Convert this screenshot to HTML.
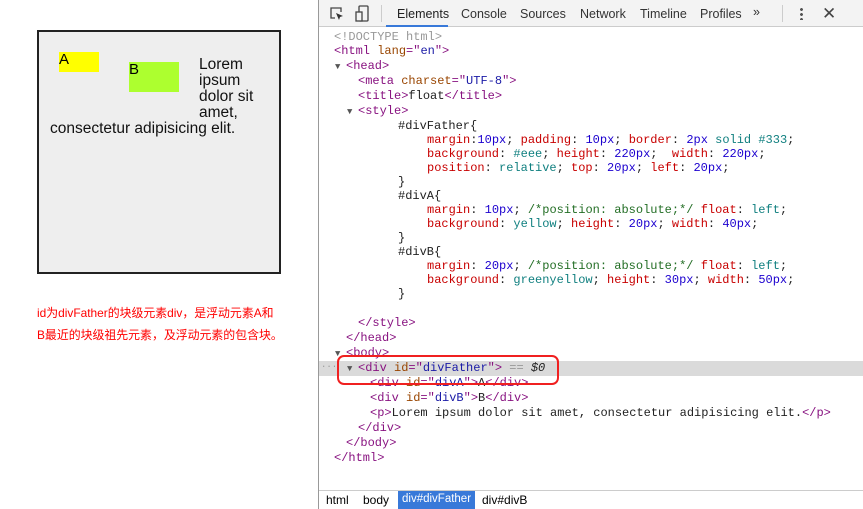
<!DOCTYPE html>
<html><head><meta charset="utf-8"><style>
*{margin:0;padding:0;box-sizing:border-box}
body{width:863px;height:509px;background:#fff;position:relative;overflow:hidden;font-family:"Liberation Sans",sans-serif}
.box{position:absolute;left:37px;top:30px;width:244px;height:244px;border:2px solid #222;background:#eee}
.a{position:absolute;left:59px;top:52px;width:40px;height:20px;background:#ff0;font-size:15px;line-height:16px}
.b{position:absolute;left:129px;top:62px;width:50px;height:30px;background:#adff2f;font-size:15px;line-height:16px}
.lt{position:absolute;font-size:15.5px;line-height:16px;color:#111}
.red{position:absolute;left:37px;color:#f00;font-size:11.9px;font-family:"Liberation Sans","Noto Sans CJK SC",sans-serif}
.dev{position:absolute;left:318px;top:0;width:545px;height:509px;border-left:1px solid #999;background:#fff}
.tb{position:absolute;left:0;top:0;width:545px;height:27px;background:#f3f3f3;border-bottom:1px solid #ccc}
.tab{position:absolute;top:7px;font-size:12.5px;color:#333}
.l{position:absolute;font-family:"Liberation Mono",monospace;font-size:12px;line-height:14px;white-space:pre;color:#222}
.t{color:#881280}.an{color:#994500}.av{color:#1a1aa6}.g{color:#999}
.p{color:#c80000}.n{color:#1c00cf}.k{color:#0f7f7f}.c{color:#236e25}
.tri{font-size:9px;color:#555}
.hl{position:absolute;left:0;top:361px;width:545px;height:15px;background:#dadada}
.rb{position:absolute;left:18px;top:355px;width:222px;height:30px;border:2px solid #f02020;border-radius:7px}
.bot{position:absolute;left:0;top:490px;width:545px;height:19px;border-top:1px solid #ccc;background:#fff;font-size:12px}
.bot span{position:absolute;top:2px}
</style></head><body>
<div class="box"></div>
<div class="a">A</div>
<div class="b">B</div>
<div class="lt" style="left:199px;top:57px">Lorem<br>ipsum<br>dolor sit<br>amet,</div>
<div class="lt" style="left:50px;top:121px">consectetur adipisicing elit.</div>
<div class="red" style="top:304px">id为divFather的块级元素div，是浮动元素A和</div>
<div class="red" style="top:326px">B最近的块级祖先元素，及浮动元素的包含块。</div>

<div class="dev">
<div class="tb">
<svg style="position:absolute;left:10px;top:6px" width="16" height="16" viewBox="0 0 16 16"><path d="M6 12H2V2h10v4" fill="none" stroke="#444" stroke-width="1.3"/><path d="M7 7l7 3-3 1-1 3z" fill="#333"/></svg>
<svg style="position:absolute;left:36px;top:5px" width="14" height="18" viewBox="0 0 14 18"><rect x="4" y="1" width="9" height="15" rx="1" fill="none" stroke="#444" stroke-width="1.3"/><rect x="1" y="7" width="6" height="9" fill="#f3f3f3" stroke="#444" stroke-width="1.3"/></svg>
<div style="position:absolute;left:62px;top:5px;width:1px;height:17px;background:#ccc"></div>
<div class="tab" style="left:78px;color:#222">Elements</div>
<div style="position:absolute;left:67px;top:25px;width:62px;height:2px;background:#3879d9"></div>
<div class="tab" style="left:142px">Console</div>
<div class="tab" style="left:201px">Sources</div>
<div class="tab" style="left:261px">Network</div>
<div class="tab" style="left:321px">Timeline</div>
<div class="tab" style="left:381px">Profiles</div>
<div class="tab" style="left:434px;top:5px">»</div>
<div style="position:absolute;left:463px;top:5px;width:1px;height:17px;background:#ccc"></div>
<div style="position:absolute;left:481px;top:7px;width:3px;height:13px;background:radial-gradient(circle,#555 1.3px,transparent 1.6px) 0 0/3px 5px"></div>
<div class="tab" style="left:503px;top:4px;font-size:17px;color:#444">✕</div>
</div>
<div class="hl"></div>
<div class="l g" style="left:15px;top:30px">&lt;!DOCTYPE html&gt;</div>
<div class="l" style="left:15px;top:44px"><span class="t">&lt;html</span> <span class="an">lang</span><span class="t">="</span><span class="av">en</span><span class="t">"&gt;</span></div>
<div class="l" style="left:16px;top:59px"><span class="tri">▼</span></div>
<div class="l" style="left:27px;top:59px"><span class="t">&lt;head&gt;</span></div>
<div class="l" style="left:39px;top:74px"><span class="t">&lt;meta</span> <span class="an">charset</span><span class="t">="</span><span class="av">UTF-8</span><span class="t">"&gt;</span></div>
<div class="l" style="left:39px;top:89px"><span class="t">&lt;title&gt;</span>float<span class="t">&lt;/title&gt;</span></div>
<div class="l" style="left:28px;top:104px"><span class="tri">▼</span></div>
<div class="l" style="left:39px;top:104px"><span class="t">&lt;style&gt;</span></div>
<div class="l" style="left:79px;top:119px">#divFather{</div>
<div class="l" style="left:108px;top:133px"><span class="p">margin</span>:<span class="n">10px</span>; <span class="p">padding</span>: <span class="n">10px</span>; <span class="p">border</span>: <span class="n">2px</span> <span class="k">solid</span> <span class="k">#333</span>;</div>
<div class="l" style="left:108px;top:147px"><span class="p">background</span>: <span class="k">#eee</span>; <span class="p">height</span>: <span class="n">220px</span>;  <span class="p">width</span>: <span class="n">220px</span>;</div>
<div class="l" style="left:108px;top:161px"><span class="p">position</span>: <span class="k">relative</span>; <span class="p">top</span>: <span class="n">20px</span>; <span class="p">left</span>: <span class="n">20px</span>;</div>
<div class="l" style="left:79px;top:175px">}</div>
<div class="l" style="left:79px;top:189px">#divA{</div>
<div class="l" style="left:108px;top:203px"><span class="p">margin</span>: <span class="n">10px</span>; <span class="c">/*position: absolute;*/</span> <span class="p">float</span>: <span class="k">left</span>;</div>
<div class="l" style="left:108px;top:217px"><span class="p">background</span>: <span class="k">yellow</span>; <span class="p">height</span>: <span class="n">20px</span>; <span class="p">width</span>: <span class="n">40px</span>;</div>
<div class="l" style="left:79px;top:231px">}</div>
<div class="l" style="left:79px;top:245px">#divB{</div>
<div class="l" style="left:108px;top:259px"><span class="p">margin</span>: <span class="n">20px</span>; <span class="c">/*position: absolute;*/</span> <span class="p">float</span>: <span class="k">left</span>;</div>
<div class="l" style="left:108px;top:273px"><span class="p">background</span>: <span class="k">greenyellow</span>; <span class="p">height</span>: <span class="n">30px</span>; <span class="p">width</span>: <span class="n">50px</span>;</div>
<div class="l" style="left:79px;top:287px">}</div>
<div class="l" style="left:39px;top:316px"><span class="t">&lt;/style&gt;</span></div>
<div class="l" style="left:27px;top:331px"><span class="t">&lt;/head&gt;</span></div>
<div class="l" style="left:16px;top:346px"><span class="tri">▼</span></div>
<div class="l" style="left:27px;top:346px"><span class="t">&lt;body&gt;</span></div>
<div class="l g" style="left:2px;top:360px;font-size:9px">···</div>
<div class="l" style="left:28px;top:361px"><span class="tri">▼</span></div>
<div class="l" style="left:39px;top:361px"><span class="t">&lt;div</span> <span class="an">id</span><span class="t">="</span><span class="av">divFather</span><span class="t">"&gt;</span> <span class="g">==</span> <i>$0</i></div>
<div class="l" style="left:51px;top:376px"><span class="t">&lt;div</span> <span class="an">id</span><span class="t">="</span><span class="av">divA</span><span class="t">"&gt;</span>A<span class="t">&lt;/div&gt;</span></div>
<div class="l" style="left:51px;top:391px"><span class="t">&lt;div</span> <span class="an">id</span><span class="t">="</span><span class="av">divB</span><span class="t">"&gt;</span>B<span class="t">&lt;/div&gt;</span></div>
<div class="l" style="left:51px;top:406px"><span class="t">&lt;p&gt;</span>Lorem ipsum dolor sit amet, consectetur adipisicing elit.<span class="t">&lt;/p&gt;</span></div>
<div class="l" style="left:39px;top:421px"><span class="t">&lt;/div&gt;</span></div>
<div class="l" style="left:27px;top:436px"><span class="t">&lt;/body&gt;</span></div>
<div class="l" style="left:15px;top:451px"><span class="t">&lt;/html&gt;</span></div>
<div class="rb"></div>
<div class="bot">
<span style="left:7px">html</span>
<span style="left:44px">body</span>
<span style="left:79px;top:0;height:18px;width:77px;background:#3879d9;color:#fff;padding:2px 0 0 4px;font-size:11.5px;white-space:nowrap">div#divFather</span>
<span style="left:163px">div#divB</span>
</div>
</div>
</body></html>
